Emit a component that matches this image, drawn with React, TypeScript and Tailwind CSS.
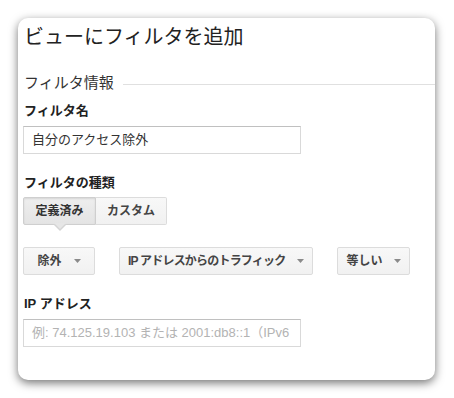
import React from "react";

const font = { fontFamily: '"Liberation Sans", "Noto Sans CJK JP", sans-serif' };

function Caret() {
  return (
    <svg width="7" height="4" viewBox="0 0 7 4" className="shrink-0">
      <path d="M0 0 L7 0 L3.5 4 Z" fill="#8a8a8a" />
    </svg>
  );
}

function Dropdown({ label, tight }: { label: string; tight?: boolean }) {
  return (
    <div className="flex h-[28px] min-w-[72px] items-center justify-center gap-[12px] rounded-[2px] border border-[#dcdcdc] bg-gradient-to-b from-[#f8f8f8] to-[#f1f1f1] px-[8px] text-[12px] font-bold text-[#444]">
      <span className={tight ? "leading-[16px] tracking-[-0.8px]" : "leading-[16px]"}>{label}</span>
      <Caret />
    </div>
  );
}

export default function App() {
  return (
    <div className="min-h-[398px] w-[454px] bg-white pt-[18px] pl-[18px]" style={font}>
      <div className="h-[362px] w-[417px] rounded-[10px] bg-white pt-[5px] pl-[5px] shadow-[0_3px_10px_rgba(0,0,0,0.55)]">
        <div className="ml-[1px] text-[20px] leading-[28px] text-[#222]">ビューにフィルタを追加</div>

        <div className="mt-[22px] flex items-center">
          <div className="ml-[1px] text-[15px] leading-[20px] text-[#333]">フィルタ情報</div>
          <div className="ml-[9px] mt-[2px] h-px flex-1 bg-[#e0e0e0]" />
        </div>

        <div className="ml-[1px] mt-[9px] text-[13px] font-bold leading-[18px] text-[#222]">フィルタ名</div>
        <div className="mt-[6px] flex h-[28px] w-[278px] items-center border border-[#d9d9d9] border-t-[#c0c0c0] px-[8px] text-[13px] text-[#333]">
          自分のアクセス除外
        </div>

        <div className="ml-[1px] mt-[20px] text-[13px] font-bold leading-[18px] text-[#222]">フィルタの種類</div>
        <div className="mt-[5px] flex">
          <div className="relative flex h-[28px] w-[73px] items-center justify-center rounded-l-[2px] border border-[#cfcfcf] bg-gradient-to-b from-[#eeeeee] to-[#e4e4e4] text-[12px] font-bold text-[#333] shadow-[inset_0_1px_2px_rgba(0,0,0,0.1)]">
            定義済み
            <div className="absolute left-1/2 top-full -ml-[7px] h-0 w-0 border-x-[7px] border-t-[7px] border-x-transparent border-t-[#d4d4d4]" />
            <div className="absolute left-1/2 top-full -ml-[6px] -mt-[1px] h-0 w-0 border-x-[6px] border-t-[6px] border-x-transparent border-t-[#e6e6e6]" />
          </div>
          <div className="flex h-[28px] w-[71px] items-center justify-center rounded-r-[2px] border border-l-0 border-[#dcdcdc] bg-gradient-to-b from-[#f8f8f8] to-[#f1f1f1] text-[12px] font-bold text-[#444]">
            カスタム
          </div>
        </div>

        <div className="mt-[22px] flex gap-[24px]">
          <Dropdown label="除外" />
          <Dropdown label="IP アドレスからのトラフィック" tight />
          <Dropdown label="等しい" />
        </div>

        <div className="ml-[1px] mt-[20px] text-[13px] font-bold leading-[18px] text-[#222]">IP アドレス</div>
        <div className="mt-[6px] flex h-[28px] w-[278px] items-center overflow-hidden whitespace-nowrap border border-[#d9d9d9] border-t-[#c0c0c0] px-[8px] text-[13px] text-[#b3b3b3]">
          例: 74.125.19.103 または 2001:db8::1（IPv6
        </div>
      </div>
    </div>
  );
}
